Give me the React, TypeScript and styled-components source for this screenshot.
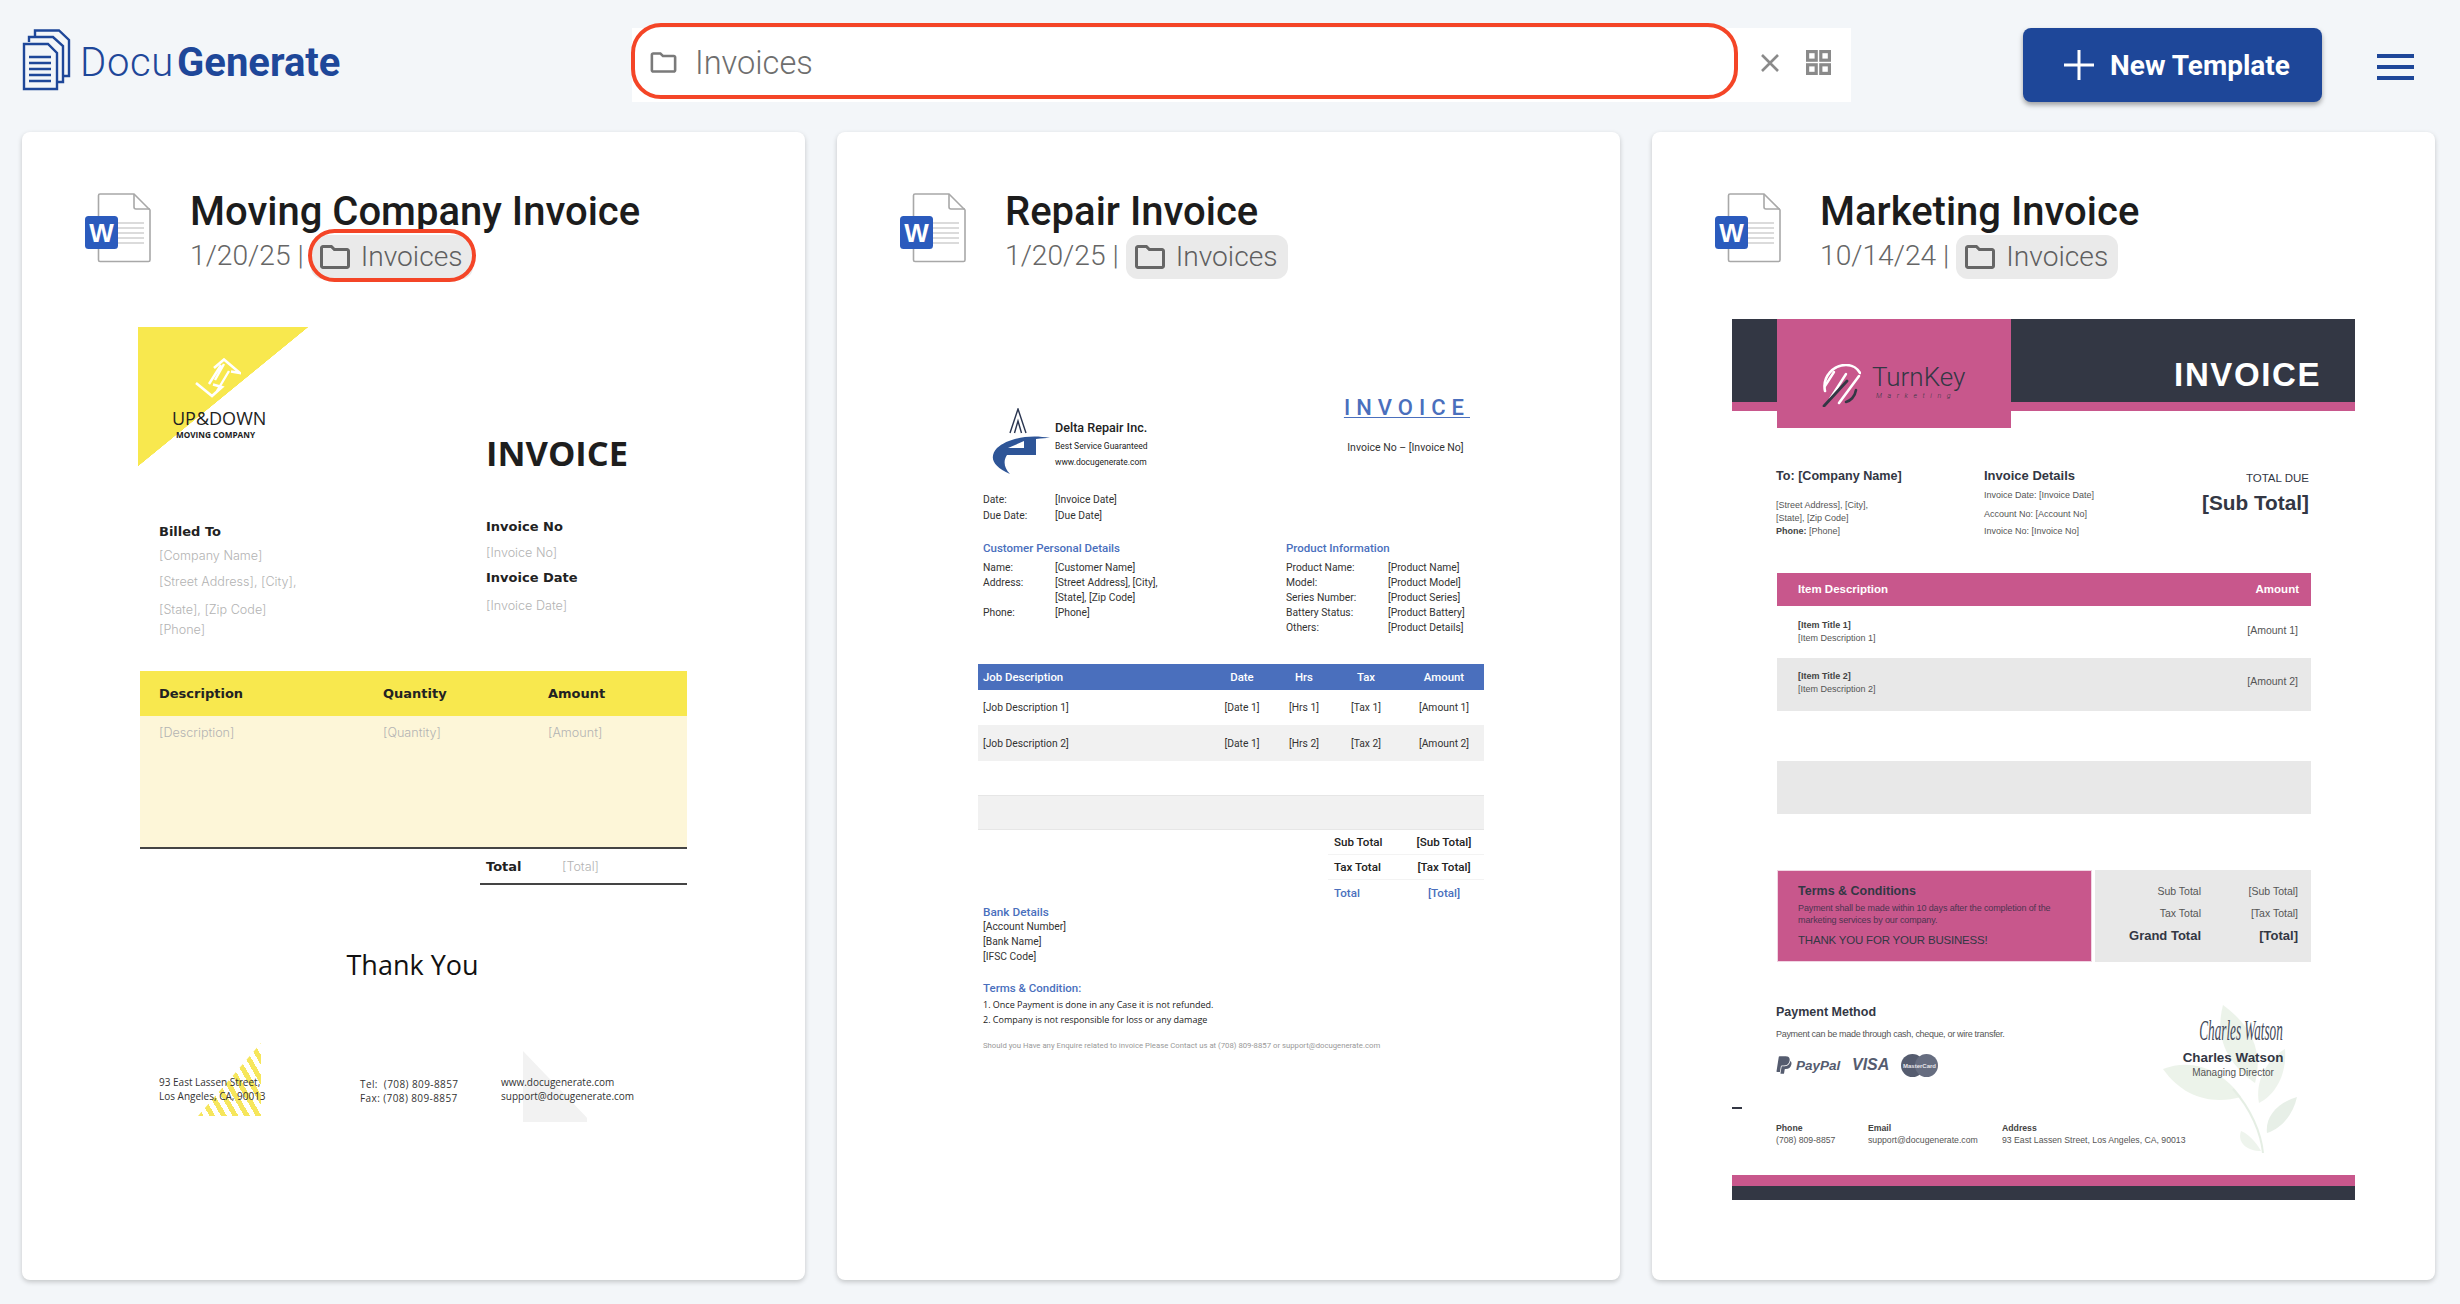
import React from 'react';
import styled, { createGlobalStyle } from 'styled-components';
import { FaPaypal } from 'react-icons/fa';

const GlobalStyle = createGlobalStyle`
	html, body {
		margin: 0;
		padding: 0;
		background: #f3f6f9;
		font-family: Roboto, "Liberation Sans", sans-serif;
	}
	*, *::before, *::after {
		box-sizing: border-box;
	}
`;

const BLUE = '#1e4799';
const RED = '#f44527';
const YELLOW = '#f8e84e';
const PINK = '#c8578c';
const SLATE = '#333744';
const DOC_BLUE = '#4a6fbd';

const Page = styled.div`
	width: 2460px;
	height: 1304px;
	overflow: hidden;
	padding-left: 22px;
`;

/* ---------- top bar ---------- */

const Bar = styled.header`
	display: flex;
	align-items: flex-start;
	height: 132px;
	padding-top: 28px;
`;

const Brand = styled.div`
	display: flex;
	align-items: flex-start;
	width: 610px;
	svg {
		margin-top: 1px;
	}
`;

const BrandName = styled.div`
	margin: 11px 0 0 9px;
	font-size: 40px;
	line-height: 48px;
	font-weight: 300;
	letter-spacing: 0.7px;
	color: ${BLUE};
	b {
		font-weight: 700;
		margin-left: 3px;
		letter-spacing: 0;
	}
`;

const Search = styled.div`
	position: relative;
	display: flex;
	align-items: center;
	width: 1219px;
	height: 74px;
	background: #fff;
	padding: 0 0 5px 16px;
	&::after {
		content: '';
		position: absolute;
		left: -1px;
		top: -5px;
		width: 1107px;
		height: 76px;
		border: 4px solid ${RED};
		border-radius: 30px;
	}
`;

const SearchText = styled.span`
	margin-left: 16px;
	width: 1065px;
	font-size: 32.6px;
	font-weight: 300;
	color: #6e6e6e;
`;

const SearchIcon = styled.svg`
	margin-right: 26px;
	flex: none;
`;

const NewButton = styled.button`
	display: flex;
	align-items: center;
	width: 299px;
	height: 74px;
	margin-left: 172px;
	padding: 0 0 0 41px;
	border: 0;
	border-radius: 8px;
	background: ${BLUE};
	color: #fff;
	font-family: Roboto, sans-serif;
	font-size: 28px;
	font-weight: 700;
	box-shadow: 0 3px 5px rgba(0, 0, 0, 0.35);
	span {
		margin-left: 16px;
	}
`;

const Burger = styled.div`
	display: flex;
	flex-direction: column;
	gap: 7px;
	width: 37px;
	margin: 26px 0 0 55px;
	i {
		display: block;
		height: 4px;
		background: ${BLUE};
	}
`;

/* ---------- cards ---------- */

const Cards = styled.main`
	display: grid;
	grid-template-columns: repeat(3, 783px);
	gap: 32px;
`;

const Card = styled.article`
	height: 1148px;
	border-radius: 8px;
	background: #fff;
	padding-top: 54px;
	box-shadow: 0 2px 5px rgba(0, 0, 0, 0.2);
	overflow: hidden;
`;

const CardHead = styled.div`
	display: flex;
	height: 133px;
	padding-left: 63px;
`;

const FileIcon = styled.svg`
	flex: none;
	margin: 7px 39px 0 0;
`;

const CardTitle = styled.h2`
	margin: 0 0 -2px;
	padding-top: 2px;
	font-size: 40px;
	line-height: 48px;
	font-weight: 500;
	color: #1c1c1c;
	white-space: nowrap;
`;

const CardMeta = styled.div`
	display: flex;
	align-items: center;
	margin-top: 1px;
	height: 44px;
`;

const CardDate = styled.span`
	font-size: 28.2px;
	font-weight: 300;
	color: #666;
	padding-bottom: 4px;
`;

const Chip = styled.span<{ $marked?: boolean }>`
	position: relative;
	display: flex;
	align-items: center;
	height: 44px;
	margin-left: 7px;
	padding: 0 10px 0 6px;
	border-radius: 12px;
	background: #eaeaea;
	font-size: 28.2px;
	font-weight: 300;
	color: #5f5f5f;
	span {
		margin-left: 8px;
		padding-bottom: 2px;
	}
	&::after {
		content: ${(p) => (p.$marked ? "''" : 'none')};
		position: absolute;
		left: -3px;
		right: -3px;
		top: -6px;
		bottom: -3px;
		border: 4px solid ${RED};
		border-radius: 28px;
	}
`;

/* ---------- moving company invoice ---------- */

const MovingDoc = styled.section`
	width: 549px;
	margin: 8px 0 0 116px;
	font-family: "Open Sans", sans-serif;
`;

const MovingTop = styled.div`
	display: flex;
	height: 139px;
`;

const Pennant = styled.div`
	width: 170px;
	height: 139px;
	padding: 31px 0 0 57px;
	background: linear-gradient(to bottom right, ${YELLOW} 50%, transparent 50.2%);
	svg {
		display: block;
	}
`;

const PennantName = styled.div`
	margin: 10px 0 0 -23px;
	font-size: 18px;
	line-height: 20px;
	color: #222;
	white-space: nowrap;
`;

const PennantSub = styled.div`
	margin: 1px 0 0 -19px;
	font-size: 8.2px;
	line-height: 12px;
	font-weight: 700;
	color: #222;
	white-space: nowrap;
`;

const MovingHeading = styled.div`
	margin: 106px 0 0 178px;
	font-size: 34.5px;
	line-height: 40px;
	font-weight: 700;
	color: #1e1e1e;
`;

const MovingMeta = styled.div`
	display: grid;
	grid-template-columns: 327px 1fr;
	height: 155px;
	margin-top: 50px;
	padding-left: 21px;
`;

const MovingCol = styled.div<{ $top?: number }>`
	padding-top: ${(p) => p.$top ?? 0}px;
`;

const MovingLabel = styled.div<{ $mt?: number }>`
	margin-top: ${(p) => p.$mt ?? 0}px;
	font-family: "DejaVu Sans", sans-serif;
	font-size: 13px;
	line-height: 20px;
	font-weight: 700;
	color: #222;
`;

const MovingHint = styled.div<{ $mt?: number }>`
	margin-top: ${(p) => p.$mt ?? 0}px;
	font-family: Inter, sans-serif;
	font-size: 12.6px;
	line-height: 20px;
	font-weight: 300;
	color: #b3b3b3;
	white-space: nowrap;
`;

const YellowTable = styled.div`
	width: 547px;
	margin-left: 2px;
`;

const YellowHead = styled.div`
	display: grid;
	grid-template-columns: 224px 165px 1fr;
	align-items: center;
	height: 45px;
	padding-left: 19px;
	background: ${YELLOW};
	font-family: "DejaVu Sans", sans-serif;
	font-size: 13px;
	font-weight: 700;
	color: #222;
`;

const YellowBody = styled.div`
	display: grid;
	grid-template-columns: 224px 165px 1fr;
	height: 133px;
	padding: 7px 0 0 19px;
	background: #fdf6d8;
	border-bottom: 2px solid #444;
`;

const TotalRow = styled.div`
	display: grid;
	grid-template-columns: 76px 1fr;
	width: 207px;
	height: 36px;
	margin-left: 342px;
	padding: 8px 0 0 6px;
	border-bottom: 2px solid #444;
`;

const ThankYou = styled.div`
	margin-top: 65px;
	font-size: 27px;
	line-height: 30px;
	text-align: center;
	color: #111;
`;

const MovingFoot = styled.div`
	position: relative;
	display: grid;
	grid-template-columns: 201px 141px 1fr;
	margin-top: 92px;
	padding-left: 21px;
`;

const Stripes = styled.div`
	position: absolute;
	left: 60px;
	top: -29px;
	width: 63px;
	height: 73px;
	background: repeating-linear-gradient(60deg, #f6e65c 0 5px, transparent 5px 10px);
	clip-path: polygon(100% 0, 0 100%, 100% 100%);
`;

const GreyWedge = styled.div`
	position: absolute;
	left: 385px;
	top: -21px;
	width: 64px;
	height: 71px;
	background: #f2f2f2;
	clip-path: polygon(0 0, 100% 94%, 100% 100%, 0 100%);
`;

const FootCol = styled.div<{ $top?: number; $wide?: boolean }>`
	position: relative;
	padding-top: ${(p) => p.$top ?? 0}px;
	font-size: 10px;
	line-height: 14px;
	color: #333;
	letter-spacing: ${(p) => (p.$wide ? '0.4px' : 0)};
	white-space: nowrap;
`;

/* ---------- repair invoice ---------- */

const RepairDoc = styled.section`
	width: 506px;
	margin: -1px 0 0 141px;
	padding-top: 76px;
	font-size: 10.3px;
	color: #333;
`;

const RepairTop = styled.div`
	display: flex;
	height: 80px;
	padding-left: 14px;
	svg {
		margin-top: 14px;
		flex: none;
	}
`;

const RepairCompany = styled.div`
	margin: 26px 0 0 5px;
	font-size: 8.5px;
	line-height: 16px;
	color: #222;
	strong {
		display: block;
		margin-bottom: 2px;
		font-size: 12.6px;
		font-weight: 500;
	}
`;

const RepairRight = styled.div`
	margin: 0 17px 0 auto;
	text-align: center;
`;

const RepairHeading = styled.div`
	font-size: 22px;
	line-height: 28px;
	font-weight: 500;
	letter-spacing: 6px;
	margin-right: -3px;
	color: ${DOC_BLUE};
	text-decoration: underline;
	text-decoration-thickness: 1px;
	text-underline-offset: 2px;
`;

const RepairNumber = styled.div`
	margin-top: 19px;
	font-size: 10.5px;
	line-height: 14px;
`;

const KeyRows = styled.div<{ $label: number }>`
	display: grid;
	grid-template-columns: ${(p) => p.$label}px 1fr;
	white-space: nowrap;
`;

const DateRows = styled(KeyRows)`
	margin: 18px 0 0 5px;
	line-height: 16px;
`;

const RepairDetails = styled.div`
	display: grid;
	grid-template-columns: 303px 1fr;
	height: 124px;
	margin: 16px 0 0 5px;
	line-height: 15px;
`;

const BlueTitle = styled.div<{ $mt?: number; $after?: number }>`
	margin-top: ${(p) => p.$mt ?? 0}px;
	margin-bottom: ${(p) => p.$after ?? 4}px;
	font-size: 11.5px;
	line-height: 16px;
	font-weight: 500;
	color: ${DOC_BLUE};
`;

const RepairRow = styled.div<{ $h: number; $alt?: boolean; $head?: boolean }>`
	display: grid;
	grid-template-columns: 226px 76px 48px 76px 80px;
	align-items: center;
	height: ${(p) => p.$h}px;
	text-align: center;
	background: ${(p) => (p.$head ? DOC_BLUE : p.$alt ? '#f1f1f1' : '#fff')};
	color: ${(p) => (p.$head ? '#fff' : '#333')};
	font-size: ${(p) => (p.$head ? '11.4px' : '10.3px')};
	font-weight: ${(p) => (p.$head ? 500 : 400)};
	span:first-child {
		text-align: left;
		padding-left: 5px;
	}
`;

const GreyBand = styled.div`
	height: 35px;
	background: #f1f1f1;
	border-top: 1.5px solid #e6e6e6;
	border-bottom: 1.5px solid #e6e6e6;
`;

const RepairTotals = styled.div`
	width: 156px;
	margin-left: 350px;
`;

const RepairTotal = styled.div<{ $blue?: boolean }>`
	display: grid;
	grid-template-columns: 76px 1fr;
	align-items: center;
	height: 25px;
	padding-left: 6px;
	font-size: 11.6px;
	font-weight: 500;
	color: ${(p) => (p.$blue ? DOC_BLUE : '#222')};
	border-bottom: ${(p) => (p.$blue ? 0 : '1px solid #f3f3f3')};
	span:last-child {
		text-align: center;
		margin-left: -6px;
	}
`;

const RepairNotes = styled.div`
	margin-left: 5px;
	line-height: 15px;
	color: #333;
`;

const BankTitle = styled.div`
	font-size: 11.8px;
	line-height: 14px;
	font-weight: 500;
	color: ${DOC_BLUE};
`;

const TermLine = styled.div`
	font-family: "Open Sans", sans-serif;
	font-size: 9px;
	line-height: 15px;
	color: #222;
	white-space: nowrap;
`;

const FinePrint = styled.div`
	margin-top: 13px;
	font-size: 7.75px;
	line-height: 12px;
	color: #999;
	white-space: nowrap;
`;

/* ---------- marketing invoice ---------- */

const MarketingDoc = styled.section`
	width: 623px;
	margin: 0 0 0 80px;
	font-family: "Liberation Sans", Arial, sans-serif;
	font-size: 9px;
	color: #555;
`;

const Banner = styled.div`
	display: flex;
	height: 109px;
	background: linear-gradient(${SLATE} 0 83px, ${PINK} 83px 92px, transparent 92px);
`;

const LogoBlock = styled.div`
	display: flex;
	width: 234px;
	height: 109px;
	margin-left: 45px;
	padding: 45px 0 0 45px;
	background: ${PINK};
`;

const LogoName = styled.div`
	margin: -1px 0 0 11px;
	font-family: Roboto, sans-serif;
	font-size: 26px;
	line-height: 28px;
	font-weight: 300;
	color: ${SLATE};
	small {
		display: block;
		font-size: 7px;
		line-height: 10px;
		font-style: italic;
		letter-spacing: 5.6px;
		margin-left: 4px;
	}
`;

const BannerTitle = styled.div`
	margin-left: auto;
	padding: 36px 34px 0 0;
	font-size: 33px;
	line-height: 40px;
	font-weight: 700;
	letter-spacing: 1.6px;
	color: #fff;
`;

const InfoGrid = styled.div`
	display: grid;
	grid-template-columns: 208px 1fr auto;
	height: 105px;
	margin: 40px 46px 0 44px;
`;

const InfoTitle = styled.div<{ $size: number }>`
	font-size: ${(p) => p.$size}px;
	line-height: 16px;
	font-weight: 700;
	color: ${SLATE};
	white-space: nowrap;
`;

const InfoLine = styled.div<{ $mt?: number; $tight?: boolean }>`
	margin-top: ${(p) => p.$mt ?? 0}px;
	line-height: 13px;
	letter-spacing: ${(p) => (p.$tight ? '-0.3px' : 0)};
	white-space: nowrap;
	b {
		color: #444;
	}
`;

const DueCol = styled.div`
	padding-top: 2px;
	text-align: right;
	color: ${SLATE};
	font-size: 11.5px;
	line-height: 16px;
	strong {
		display: block;
		margin-top: 5px;
		font-size: 20.8px;
		line-height: 24px;
	}
`;

const ItemTable = styled.div`
	width: 534px;
	margin-left: 45px;
`;

const ItemHead = styled.div`
	display: flex;
	justify-content: space-between;
	align-items: center;
	height: 33px;
	padding: 0 12px 2px 21px;
	background: ${PINK};
	color: #fff;
	font-size: 11.5px;
	font-weight: 700;
`;

const ItemRow = styled.div<{ $h: number; $top: number; $alt?: boolean }>`
	display: flex;
	justify-content: space-between;
	height: ${(p) => p.$h}px;
	padding: ${(p) => p.$top}px 13px 0 21px;
	background: ${(p) => (p.$alt ? '#e8e8e8' : '#fff')};
	line-height: 13px;
	b {
		display: block;
		color: #444;
	}
`;

const ItemAmount = styled.span`
	margin-top: 5px;
	font-size: 10.5px;
`;

const BlankBand = styled.div`
	height: 53px;
	margin-top: 50px;
	background: #e8e8e8;
`;

const Summary = styled.div`
	display: grid;
	grid-template-columns: 315px 216px;
	gap: 3px;
	height: 92px;
	margin-top: 56px;
`;

const TermsBox = styled.div`
	padding: 12px 0 0 20px;
	background: ${PINK};
	border: 1px solid #f0d5e3;
	line-height: 12.3px;
	color: #4d3550;
	letter-spacing: -0.12px;
	white-space: nowrap;
`;

const TermsTitle = styled.div`
	margin-bottom: 2.6px;
	font-size: 12.5px;
	line-height: 16px;
	font-weight: 700;
	color: ${SLATE};
	letter-spacing: 0;
`;

const TermsThanks = styled.div`
	margin-top: 6px;
	font-size: 11.5px;
	line-height: 16px;
	color: ${SLATE};
	letter-spacing: -0.2px;
`;

const SumBox = styled.div`
	display: grid;
	grid-template-columns: 106px 97px;
	grid-auto-rows: 22px;
	align-items: center;
	padding-top: 10px;
	background: #e8e8e8;
	text-align: right;
	font-size: 10.5px;
	color: #555;
`;

const SumGrand = styled.span`
	font-size: 13px;
	font-weight: 700;
	color: ${SLATE};
`;

const PaySection = styled.div`
	position: relative;
	display: flex;
	height: 103px;
	margin: 42px 0 0 44px;
`;

const PayLeft = styled.div`
	width: 387px;
	flex: none;
`;

const PayTitle = styled.div`
	margin-bottom: 8px;
	font-size: 12.5px;
	line-height: 16px;
	font-weight: 700;
	color: ${SLATE};
`;

const PayMarks = styled.div`
	display: flex;
	align-items: center;
	height: 22px;
	margin-top: 13px;
	color: #555c6f;
`;

const PayPalMark = styled.span`
	display: flex;
	align-items: center;
	width: 76px;
	font-size: 13.5px;
	font-weight: 700;
	font-style: italic;
	svg {
		margin: 0 2px 0 -2px;
	}
`;

const VisaMark = styled.span`
	width: 49px;
	font-size: 16px;
	font-weight: 700;
	font-style: italic;
`;

const Leaf = styled.svg`
	position: absolute;
	left: 387px;
	top: 1px;
`;

const Signer = styled.div`
	position: relative;
	width: 140px;
	padding-top: 13px;
	text-align: center;
`;

const SignatureLine = styled.div`
	height: 26px;
	font-family: "Liberation Serif", serif;
	font-size: 30px;
	line-height: 26px;
	font-style: italic;
	color: #444a5a;
	white-space: nowrap;
	transform: translateX(8px) scaleX(0.44);
	margin: 0 -40px;
`;

const SignerName = styled.div`
	margin-top: 7px;
	font-size: 13.4px;
	line-height: 16px;
	font-weight: 700;
	color: ${SLATE};
	white-space: nowrap;
`;

const SignerRole = styled.div`
	font-size: 10px;
	line-height: 13px;
	color: #555;
`;

const Dash = styled.div`
	width: 10px;
	height: 2px;
	background: ${SLATE};
`;

const ContactRow = styled.div`
	position: relative;
	display: grid;
	grid-template-columns: 92px 134px 1fr;
	height: 25px;
	margin: 13px 0 0 44px;
	font-size: 8.7px;
	line-height: 12px;
	white-space: nowrap;
	b {
		display: block;
		color: #444;
	}
`;

const BottomBar = styled.div`
	height: 25px;
	margin-top: 28px;
	background: linear-gradient(${PINK} 0 11px, ${SLATE} 11px);
`;

/* ---------- drawings ---------- */

const FOLDER =
	'M9.17 6l2 2H20v10H4V6h5.17M10 4H4c-1.1 0-1.99.9-1.99 2L2 18c0 1.1.9 2 2 2h16c1.1 0 2-.9 2-2V8c0-1.1-.9-2-2-2h-8l-2-2z';

const Folder = ({ size, color }: { size: number; color: string }) => (
	<svg width={size} height={size} viewBox="0 0 24 24" fill={color} style={{ flex: 'none' }}>
		<path d={FOLDER} />
	</svg>
);

const StackLogo = () => (
	<svg width="49" height="62" viewBox="0 0 49 62" fill="none" stroke={BLUE} strokeWidth="2.4">
		<path d="M13 7V1.5H37L47 11V47H42" />
		<path d="M7 13V8H31L41 17V53H36" />
		<path d="M2 15H26L35 24V60H2Z" />
		<path d="M7 28H29M7 34H29M7 40H29M7 46H29M7 52H29" />
	</svg>
);

const WordFile = () => (
	<FileIcon width="66" height="70" viewBox="0 0 66 70">
		<path
			d="M15 1H49L65 17V67a1.5 1.5 0 0 1-1.5 1.5H15a1.5 1.5 0 0 1-1.5-1.5V2.5A1.5 1.5 0 0 1 15 1Z"
			fill="#fff"
			stroke="#a8a8a8"
			strokeWidth="1.6"
		/>
		<path d="M49 1V14a2 2 0 0 0 2 2H65" fill="none" stroke="#a8a8a8" strokeWidth="1.6" />
		<path d="M33 30H59M33 35H59M33 40H59M33 45H59M33 50H59" stroke="#cfcfcf" strokeWidth="1.6" />
		<rect x="0" y="23" width="33" height="33" rx="3.5" fill="#2b5bbd" />
		<text x="16.5" y="49" textAnchor="middle" fill="#fff" fontFamily="Liberation Sans" fontSize="26" fontWeight="700">
			W
		</text>
	</FileIcon>
);

const ArrowsMark = () => (
	<svg width="46" height="40" viewBox="0 0 46 40" fill="none" stroke="#fff" strokeWidth="2.6">
		<path d="M19 10L29 1.5L45 15L36 13.5" />
		<path d="M1 25L17 38L27 29L18 26.5" />
		<path d="M26 7L14 26M34 13L22 33M29 6L20 22" strokeWidth="2.4" />
	</svg>
);

const DeltaMark = () => (
	<svg width="58" height="66" viewBox="0 0 58 66">
		<path d="M18 25L26 1L34 25M22.5 25L26 13L29.5 25" fill="none" stroke="#2a3550" strokeWidth="1.4" />
		<path
			d="M58 30C38 26 16 30 5 40C-3 49 0 58 18 66C12 60 11 53 15 47H44V31C50 30 54 30 58 30Z"
			fill="#2e5597"
		/>
		<path d="M16 40H32V33Z" fill="#fff" />
	</svg>
);

const TurnKeyMark = () => (
	<svg width="39" height="43" viewBox="0 0 39 43" fill="none" strokeLinecap="round">
		<path d="M3 27C0 12 12 1 24 1C31 1 36 5 38 9" stroke="#fff" strokeWidth="2.6" />
		<path d="M12 8L3 22M24 10L8 35" stroke="#fff" strokeWidth="2.4" />
		<path d="M37 12L17 39" stroke="#fff" strokeWidth="2.6" />
		<path d="M25 17L2 42" stroke={SLATE} strokeWidth="2.8" />
		<path d="M34 26C33 33 28 37 24 38" stroke={SLATE} strokeWidth="2.6" />
	</svg>
);

const LeafSprig = () => (
	<Leaf width="134" height="149" viewBox="0 0 134 149" opacity="0.75">
		<path d="M60 0C90 22 100 48 92 78C70 62 50 38 60 0Z" fill="#e6efe3" />
		<path d="M0 64C30 52 60 66 78 92C48 100 20 92 0 64Z" fill="#e6efe3" />
		<path d="M122 44C124 70 112 90 96 98C92 78 102 56 122 44Z" fill="#e8f0e6" />
		<path d="M134 92C130 110 118 124 104 128C102 112 114 98 134 92Z" fill="#dfeadf" />
		<path d="M78 126C88 130 96 142 98 146C84 146 74 138 78 126Z" fill="#e9f1e7" />
		<path d="M70 84C88 104 98 128 100 148" fill="none" stroke="#dde9dc" strokeWidth="2" />
	</Leaf>
);

const MasterMark = () => (
	<svg width="37" height="23" viewBox="0 0 37 23">
		<circle cx="11.5" cy="11.5" r="11.5" fill="#555c6f" />
		<circle cx="25.5" cy="11.5" r="11.5" fill="#666d80" />
		<text x="18.5" y="14" textAnchor="middle" fontSize="6" fontWeight="700" fill="#e6e6ea" fontFamily="Liberation Sans">
			MasterCard
		</text>
	</svg>
);

/* ---------- documents ---------- */

const MovingInvoice = () => (
	<MovingDoc>
		<MovingTop>
			<Pennant>
				<ArrowsMark />
				<PennantName>UP&amp;DOWN</PennantName>
				<PennantSub>MOVING COMPANY</PennantSub>
			</Pennant>
			<MovingHeading>INVOICE</MovingHeading>
		</MovingTop>
		<MovingMeta>
			<MovingCol $top={6}>
				<MovingLabel>Billed To</MovingLabel>
				<MovingHint $mt={4}>[Company Name]</MovingHint>
				<MovingHint $mt={6}>[Street Address], [City],</MovingHint>
				<MovingHint $mt={8}>[State], [Zip Code]</MovingHint>
				<MovingHint>[Phone]</MovingHint>
			</MovingCol>
			<MovingCol $top={1}>
				<MovingLabel>Invoice No</MovingLabel>
				<MovingHint $mt={6}>[Invoice No]</MovingHint>
				<MovingLabel $mt={5}>Invoice Date</MovingLabel>
				<MovingHint $mt={8}>[Invoice Date]</MovingHint>
			</MovingCol>
		</MovingMeta>
		<YellowTable>
			<YellowHead>
				<span>Description</span>
				<span>Quantity</span>
				<span>Amount</span>
			</YellowHead>
			<YellowBody>
				<MovingHint>[Description]</MovingHint>
				<MovingHint>[Quantity]</MovingHint>
				<MovingHint>[Amount]</MovingHint>
			</YellowBody>
		</YellowTable>
		<TotalRow>
			<MovingLabel>Total</MovingLabel>
			<MovingHint>[Total]</MovingHint>
		</TotalRow>
		<ThankYou>Thank You</ThankYou>
		<MovingFoot>
			<Stripes />
			<GreyWedge />
			<FootCol $top={3}>
				93 East Lassen Street,
				<br />
				Los Angeles, CA, 90013
			</FootCol>
			<FootCol $top={5} $wide>
				Tel:&nbsp; (708) 809-8857
				<br />
				Fax: (708) 809-8857
			</FootCol>
			<FootCol $top={3}>
				www.docugenerate.com
				<br />
				support@docugenerate.com
			</FootCol>
		</MovingFoot>
	</MovingDoc>
);

const RepairInvoice = () => (
	<RepairDoc>
		<RepairTop>
			<DeltaMark />
			<RepairCompany>
				<strong>Delta Repair Inc.</strong>
				Best Service Guaranteed
				<br />
				www.docugenerate.com
			</RepairCompany>
			<RepairRight>
				<RepairHeading>INVOICE</RepairHeading>
				<RepairNumber>Invoice No – [Invoice No]</RepairNumber>
			</RepairRight>
		</RepairTop>
		<DateRows $label={72}>
			<span>Date:</span>
			<span>[Invoice Date]</span>
			<span>Due Date:</span>
			<span>[Due Date]</span>
		</DateRows>
		<RepairDetails>
			<div>
				<BlueTitle>Customer Personal Details</BlueTitle>
				<KeyRows $label={72}>
					<span>Name:</span>
					<span>[Customer Name]</span>
					<span>Address:</span>
					<span>
						[Street Address], [City],
						<br />
						[State], [Zip Code]
					</span>
					<span>Phone:</span>
					<span>[Phone]</span>
				</KeyRows>
			</div>
			<div>
				<BlueTitle>Product Information</BlueTitle>
				<KeyRows $label={102}>
					<span>Product Name:</span>
					<span>[Product Name]</span>
					<span>Model:</span>
					<span>[Product Model]</span>
					<span>Series Number:</span>
					<span>[Product Series]</span>
					<span>Battery Status:</span>
					<span>[Product Battery]</span>
					<span>Others:</span>
					<span>[Product Details]</span>
				</KeyRows>
			</div>
		</RepairDetails>
		<RepairRow $h={26} $head>
			<span>Job Description</span>
			<span>Date</span>
			<span>Hrs</span>
			<span>Tax</span>
			<span>Amount</span>
		</RepairRow>
		<RepairRow $h={35}>
			<span>[Job Description 1]</span>
			<span>[Date 1]</span>
			<span>[Hrs 1]</span>
			<span>[Tax 1]</span>
			<span>[Amount 1]</span>
		</RepairRow>
		<RepairRow $h={36} $alt>
			<span>[Job Description 2]</span>
			<span>[Date 1]</span>
			<span>[Hrs 2]</span>
			<span>[Tax 2]</span>
			<span>[Amount 2]</span>
		</RepairRow>
		<RepairRow $h={34} />
		<GreyBand />
		<RepairTotals>
			<RepairTotal>
				<span>Sub Total</span>
				<span>[Sub Total]</span>
			</RepairTotal>
			<RepairTotal>
				<span>Tax Total</span>
				<span>[Tax Total]</span>
			</RepairTotal>
			<RepairTotal $blue>
				<span>Total</span>
				<span>[Total]</span>
			</RepairTotal>
		</RepairTotals>
		<RepairNotes>
			<BankTitle>Bank Details</BankTitle>
			<div>[Account Number]</div>
			<div>[Bank Name]</div>
			<div>[IFSC Code]</div>
			<BlueTitle $mt={16} $after={1}>Terms &amp; Condition:</BlueTitle>
			<TermLine>1. Once Payment is done in any Case it is not refunded.</TermLine>
			<TermLine>2. Company is not responsible for loss or any damage</TermLine>
			<FinePrint>Should you Have any Enquire related to invoice Please Contact us at (708) 809-8857 or support@docugenerate.com</FinePrint>
		</RepairNotes>
	</RepairDoc>
);

const MarketingInvoice = () => (
	<MarketingDoc>
		<Banner>
			<LogoBlock>
				<TurnKeyMark />
				<LogoName>
					TurnKey
					<small>Marketing</small>
				</LogoName>
			</LogoBlock>
			<BannerTitle>INVOICE</BannerTitle>
		</Banner>
		<InfoGrid>
			<div>
				<InfoTitle $size={12.6}>To: [Company Name]</InfoTitle>
				<InfoLine $mt={15}>[Street Address], [City],</InfoLine>
				<InfoLine>[State], [Zip Code]</InfoLine>
				<InfoLine>
					<b>Phone:</b> [Phone]
				</InfoLine>
			</div>
			<div>
				<InfoTitle $size={13}>Invoice Details</InfoTitle>
				<InfoLine $mt={5}>Invoice Date: [Invoice Date]</InfoLine>
				<InfoLine $mt={6}>Account No: [Account No]</InfoLine>
				<InfoLine $mt={4}>Invoice No: [Invoice No]</InfoLine>
			</div>
			<DueCol>
				TOTAL DUE
				<strong>[Sub Total]</strong>
			</DueCol>
		</InfoGrid>
		<ItemTable>
			<ItemHead>
				<span>Item Description</span>
				<span>Amount</span>
			</ItemHead>
			<ItemRow $h={52} $top={13}>
				<span>
					<b>[Item Title 1]</b>
					[Item Description 1]
				</span>
				<ItemAmount>[Amount 1]</ItemAmount>
			</ItemRow>
			<ItemRow $h={53} $top={12} $alt>
				<span>
					<b>[Item Title 2]</b>
					[Item Description 2]
				</span>
				<ItemAmount>[Amount 2]</ItemAmount>
			</ItemRow>
			<BlankBand />
			<Summary>
				<TermsBox>
					<TermsTitle>Terms &amp; Conditions</TermsTitle>
					Payment shall be made within 10 days after the completion of the
					<br />
					marketing services by our company.
					<TermsThanks>THANK YOU FOR YOUR BUSINESS!</TermsThanks>
				</TermsBox>
				<SumBox>
					<span>Sub Total</span>
					<span>[Sub Total]</span>
					<span>Tax Total</span>
					<span>[Tax Total]</span>
					<SumGrand>Grand Total</SumGrand>
					<SumGrand>[Total]</SumGrand>
				</SumBox>
			</Summary>
		</ItemTable>
		<PaySection>
			<PayLeft>
				<PayTitle>Payment Method</PayTitle>
				<InfoLine $tight>Payment can be made through cash, cheque, or wire transfer.</InfoLine>
				<PayMarks>
					<PayPalMark>
						<FaPaypal size={20} />
						PayPal
					</PayPalMark>
					<VisaMark>VISA</VisaMark>
					<MasterMark />
				</PayMarks>
			</PayLeft>
			<LeafSprig />
			<Signer>
				<SignatureLine>Charles Watson</SignatureLine>
				<SignerName>Charles Watson</SignerName>
				<SignerRole>Managing Director</SignerRole>
			</Signer>
		</PaySection>
		<Dash />
		<ContactRow>
			<div>
				<b>Phone</b>
				(708) 809-8857
			</div>
			<div>
				<b>Email</b>
				support@docugenerate.com
			</div>
			<div>
				<b>Address</b>
				93 East Lassen Street, Los Angeles, CA, 90013
			</div>
		</ContactRow>
		<BottomBar />
	</MarketingDoc>
);

const templates = [
	{ title: 'Moving Company Invoice', date: '1/20/25', marked: true, Doc: MovingInvoice },
	{ title: 'Repair Invoice', date: '1/20/25', marked: false, Doc: RepairInvoice },
	{ title: 'Marketing Invoice', date: '10/14/24', marked: false, Doc: MarketingInvoice },
];

const App = () => (
	<Page>
		<GlobalStyle />
		<Bar>
			<Brand>
				<StackLogo />
				<BrandName>
					Docu<b>Generate</b>
				</BrandName>
			</Brand>
			<Search>
				<Folder size={31} color="#7a7a7a" />
				<SearchText>Invoices</SearchText>
				<SearchIcon width="20" height="20" viewBox="0 0 20 20" stroke="#8a8a8a" strokeWidth="2.6">
					<path d="M2 2L18 18M18 2L2 18" />
				</SearchIcon>
				<svg width="25" height="25" viewBox="0 0 25 25" fill="none" stroke="#8a8a8a" strokeWidth="3.2" style={{ flex: 'none' }}>
					<rect x="1.6" y="1.6" width="8.6" height="8.6" />
					<rect x="14.8" y="1.6" width="8.6" height="8.6" />
					<rect x="1.6" y="14.8" width="8.6" height="8.6" />
					<rect x="14.8" y="14.8" width="8.6" height="8.6" />
				</svg>
			</Search>
			<NewButton>
				<svg width="30" height="30" viewBox="0 0 30 30" stroke="#fff" strokeWidth="3">
					<path d="M15 0V30M0 15H30" />
				</svg>
				<span>New Template</span>
			</NewButton>
			<Burger>
				<i />
				<i />
				<i />
			</Burger>
		</Bar>
		<Cards>
			{templates.map(({ title, date, marked, Doc }) => (
				<Card key={title}>
					<CardHead>
						<WordFile />
						<div>
							<CardTitle>{title}</CardTitle>
							<CardMeta>
								<CardDate>{date} |</CardDate>
								<Chip $marked={marked}>
									<Folder size={36} color="#666" />
									<span>Invoices</span>
								</Chip>
							</CardMeta>
						</div>
					</CardHead>
					<Doc />
				</Card>
			))}
		</Cards>
	</Page>
);

export default App;
